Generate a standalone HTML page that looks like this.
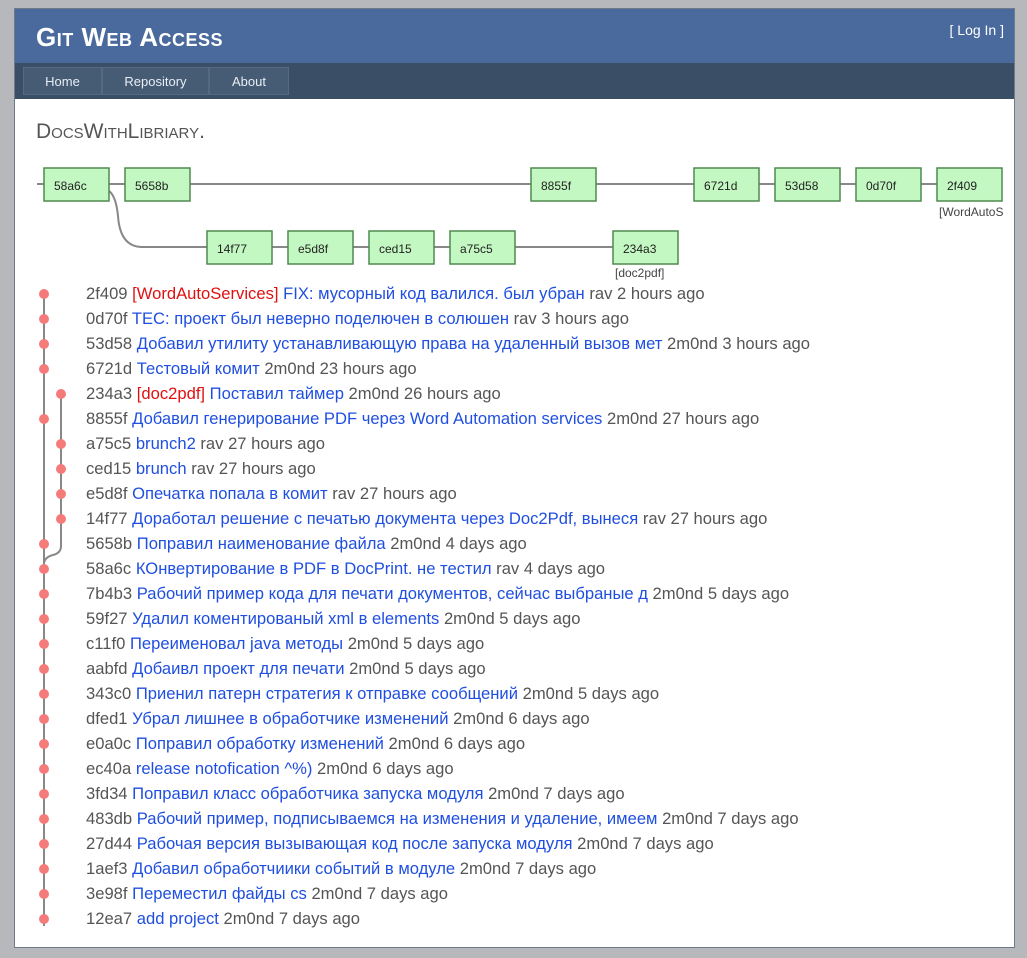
<!DOCTYPE html>
<html><head><meta charset="utf-8"><style>
body{margin:0;background:#b7b8bb;width:1027px;height:958px;overflow:hidden;font-family:"Liberation Sans",Arial,sans-serif}
#c{position:absolute;left:14px;top:8px;width:1001px;height:940px;background:#fff;border:1px solid #6e7a8a;box-sizing:border-box}
#h{position:absolute;left:0;top:0;width:100%;height:54px;background:#4a6a9e}
#h .t{position:absolute;left:21px;top:13px;color:#fff;font-weight:bold;font-size:26px;font-variant:small-caps;letter-spacing:0.5px}
#h .l{position:absolute;right:10px;top:13px;color:#fff;font-size:14px}
#n{position:absolute;left:0;top:54px;width:100%;height:36px;background:#3a4f66}
#n div{position:absolute;top:4px;height:28px;background:#465b74;border:1px solid #546a84;box-sizing:border-box;color:#e8eef5;font-size:13px;text-align:center;line-height:27px}
#ttl{position:absolute;left:21px;top:111px;font-size:21px;color:#555;font-variant:small-caps}
.r{position:absolute;left:71px;font-size:16.6px;color:#555;white-space:nowrap;line-height:20px}
.r a{color:#1f4fe0}.r b{color:#e01010;font-weight:normal}
svg{position:absolute;left:0;top:0}
</style></head><body>
<div id="c">
<div id="h"><div class="t">Git Web Access</div><div class="l">[ Log In ]</div></div>
<div id="n"><div style="left:8px;width:79px">Home</div><div style="left:87px;width:107px">Repository</div><div style="left:194px;width:80px">About</div></div>
<div id="ttl">DocsWithLibriary.</div>
<svg width="1001" height="940" font-family="Liberation Sans,Arial,sans-serif" font-size="12">
<g transform="translate(-14,-8)">
<path d="M36 183H1000M108 190Q115 195 117 215Q119 245 140 246H612" stroke="#888" stroke-width="2" fill="none"/>
<g fill="#c4f8c2" stroke="#4f8a4f" stroke-width="1.5">
<rect x="43" y="167" width="65" height="33"/><rect x="124" y="167" width="65" height="33"/><rect x="530" y="167" width="65" height="33"/><rect x="693" y="167" width="65" height="33"/><rect x="774" y="167" width="65" height="33"/><rect x="855" y="167" width="65" height="33"/><rect x="936" y="167" width="65" height="33"/>
<rect x="206" y="230" width="65" height="33"/><rect x="287" y="230" width="65" height="33"/><rect x="368" y="230" width="65" height="33"/><rect x="449" y="230" width="65" height="33"/><rect x="612" y="230" width="65" height="33"/>
</g>
<g fill="#222">
<text x="53" y="189">58a6c</text><text x="134" y="189">5658b</text><text x="540" y="189">8855f</text><text x="703" y="189">6721d</text><text x="784" y="189">53d58</text><text x="865" y="189">0d70f</text><text x="946" y="189">2f409</text>
<text x="216" y="252">14f77</text><text x="297" y="252">e5d8f</text><text x="378" y="252">ced15</text><text x="459" y="252">a75c5</text><text x="622" y="252">234a3</text>
</g>
<g fill="#444"><text x="938" y="215">[WordAutoS</text><text x="614" y="276">[doc2pdf]</text></g>
<path d="M43 293V925M60 393V545Q60 552 52 554Q44 556 43 562" stroke="#888" stroke-width="2" fill="none"/>
<g fill="#f57a7a">
<circle cx="43" cy="293" r="5"/><circle cx="43" cy="318" r="5"/><circle cx="43" cy="343" r="5"/><circle cx="43" cy="368" r="5"/><circle cx="60" cy="393" r="5"/><circle cx="43" cy="418" r="5"/><circle cx="60" cy="443" r="5"/><circle cx="60" cy="468" r="5"/><circle cx="60" cy="493" r="5"/><circle cx="60" cy="518" r="5"/><circle cx="43" cy="543" r="5"/><circle cx="43" cy="568" r="5"/><circle cx="43" cy="593" r="5"/><circle cx="43" cy="618" r="5"/><circle cx="43" cy="643" r="5"/><circle cx="43" cy="668" r="5"/><circle cx="43" cy="693" r="5"/><circle cx="43" cy="718" r="5"/><circle cx="43" cy="743" r="5"/><circle cx="43" cy="768" r="5"/><circle cx="43" cy="793" r="5"/><circle cx="43" cy="818" r="5"/><circle cx="43" cy="843" r="5"/><circle cx="43" cy="868" r="5"/><circle cx="43" cy="893" r="5"/><circle cx="43" cy="918" r="5"/>
</g></g></svg>
<div class="r" style="top:275px">2f409 <b>[WordAutoServices]</b> <a>FIX: мусорный код валился. был убран</a> rav 2 hours ago</div>
<div class="r" style="top:300px">0d70f <a>TEC: проект был неверно поделючен в солюшен</a> rav 3 hours ago</div>
<div class="r" style="top:325px">53d58 <a>Добавил утилиту устанавливающую права на удаленный вызов мет</a> 2m0nd 3 hours ago</div>
<div class="r" style="top:350px">6721d <a>Тестовый комит</a> 2m0nd 23 hours ago</div>
<div class="r" style="top:375px">234a3 <b>[doc2pdf]</b> <a>Поставил таймер</a> 2m0nd 26 hours ago</div>
<div class="r" style="top:400px">8855f <a>Добавил генерирование PDF через Word Automation services</a> 2m0nd 27 hours ago</div>
<div class="r" style="top:425px">a75c5 <a>brunch2</a> rav 27 hours ago</div>
<div class="r" style="top:450px">ced15 <a>brunch</a> rav 27 hours ago</div>
<div class="r" style="top:475px">e5d8f <a>Опечатка попала в комит</a> rav 27 hours ago</div>
<div class="r" style="top:500px">14f77 <a>Доработал решение с печатью документа через Doc2Pdf, вынеся</a> rav 27 hours ago</div>
<div class="r" style="top:525px">5658b <a>Поправил наименование файла</a> 2m0nd 4 days ago</div>
<div class="r" style="top:550px">58a6c <a>КОнвертирование в PDF в DocPrint. не тестил</a> rav 4 days ago</div>
<div class="r" style="top:575px">7b4b3 <a>Рабочий пример кода для печати документов, сейчас выбраные д</a> 2m0nd 5 days ago</div>
<div class="r" style="top:600px">59f27 <a>Удалил коментированый xml в elements</a> 2m0nd 5 days ago</div>
<div class="r" style="top:625px">c11f0 <a>Переименовал java методы</a> 2m0nd 5 days ago</div>
<div class="r" style="top:650px">aabfd <a>Добаивл проект для печати</a> 2m0nd 5 days ago</div>
<div class="r" style="top:675px">343c0 <a>Приенил патерн стратегия к отправке сообщений</a> 2m0nd 5 days ago</div>
<div class="r" style="top:700px">dfed1 <a>Убрал лишнее в обработчике изменений</a> 2m0nd 6 days ago</div>
<div class="r" style="top:725px">e0a0c <a>Поправил обработку изменений</a> 2m0nd 6 days ago</div>
<div class="r" style="top:750px">ec40a <a>release notofication ^%)</a> 2m0nd 6 days ago</div>
<div class="r" style="top:775px">3fd34 <a>Поправил класс обработчика запуска модуля</a> 2m0nd 7 days ago</div>
<div class="r" style="top:800px">483db <a>Рабочий пример, подписываемся на изменения и удаление, имеем</a> 2m0nd 7 days ago</div>
<div class="r" style="top:825px">27d44 <a>Рабочая версия вызывающая код после запуска модуля</a> 2m0nd 7 days ago</div>
<div class="r" style="top:850px">1aef3 <a>Добавил обработчиики событий в модуле</a> 2m0nd 7 days ago</div>
<div class="r" style="top:875px">3e98f <a>Переместил файды cs</a> 2m0nd 7 days ago</div>
<div class="r" style="top:900px">12ea7 <a>add project</a> 2m0nd 7 days ago</div>
</div>
</body></html>
